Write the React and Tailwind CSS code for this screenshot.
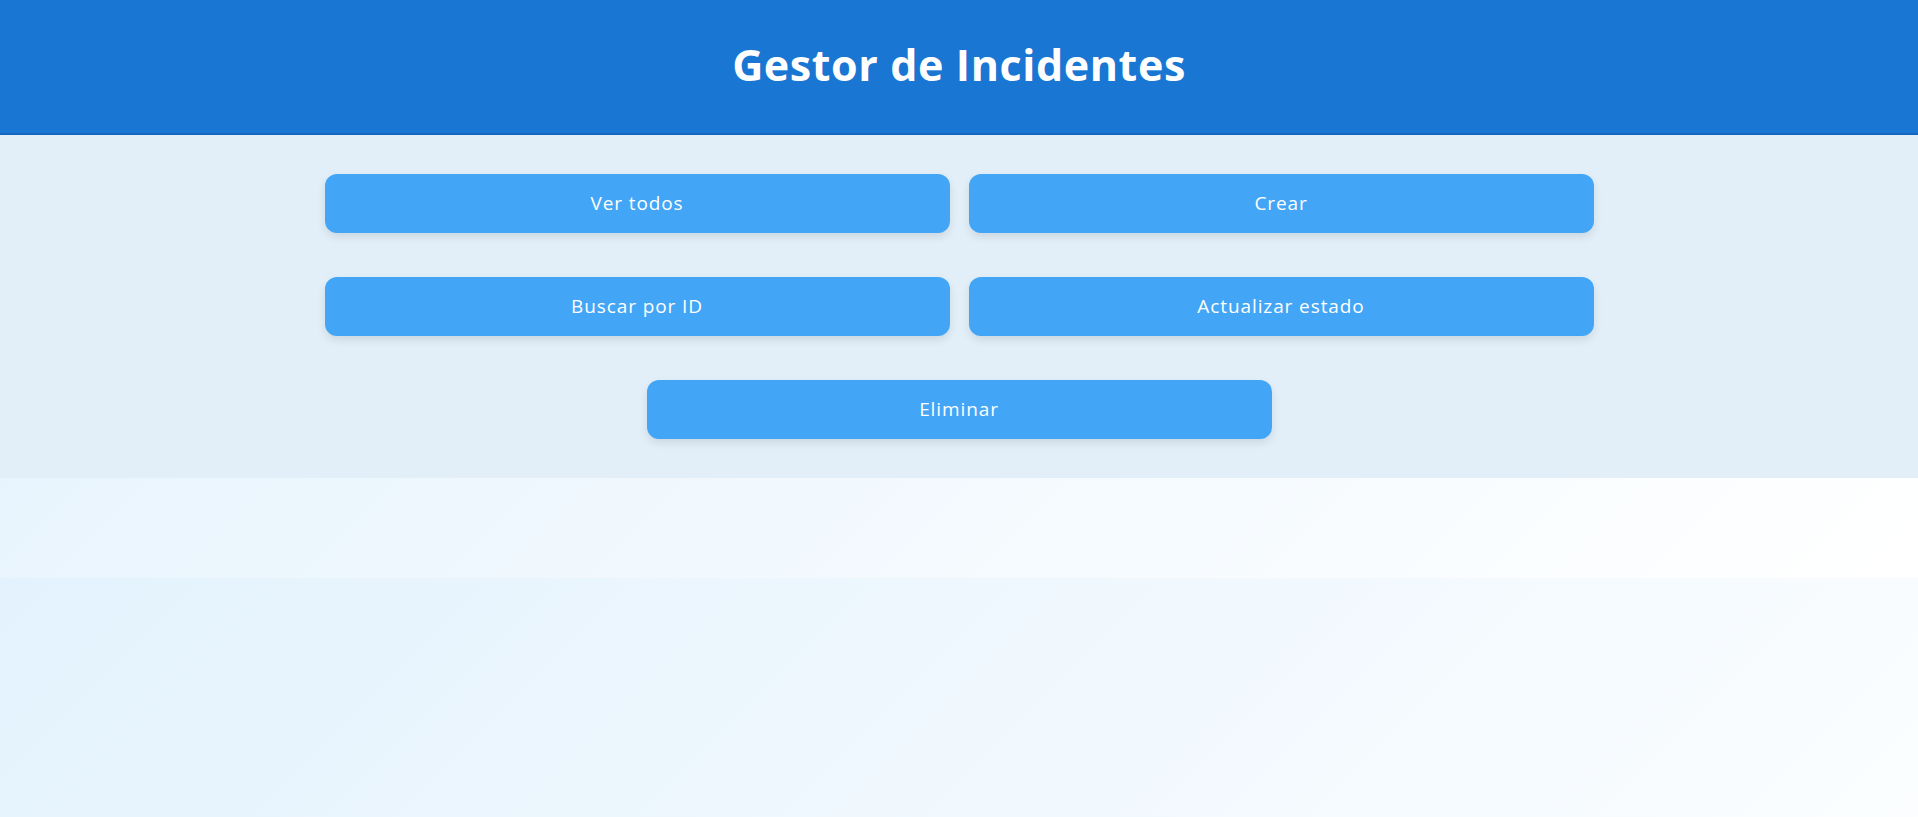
export default function App() {
  const buttons = ["Ver todos", "Crear", "Buscar por ID", "Actualizar estado", "Eliminar"];

  return (
    <div className="min-h-screen bg-[linear-gradient(135deg,#e3f2fd_0%,#ffffff_100%)] bg-[length:100%_578px] font-['Open_Sans',sans-serif]">
      <header className="h-[135px] flex items-center justify-center bg-[#1976d2] border-b-2 border-[#1565c0] shadow-[0_2px_4px_rgba(0,0,0,0.12)]">
        <h1 className="text-[43px] font-bold text-white tracking-[0.6px] -mt-[2px]">Gestor de Incidentes</h1>
      </header>
      <section className="bg-[#e2eff9] py-[39px]">
        <div className="mx-auto w-[1269px] flex flex-wrap justify-center gap-x-[19px] gap-y-[44px]">
          {buttons.map((label) => (
            <button
              key={label}
              className="w-[625px] h-[59px] rounded-[12px] bg-[#42a5f5] text-white text-[19px] tracking-[0.9px] shadow-[0_4px_8px_rgba(0,0,0,0.1)] hover:bg-[#1e88e5]"
            >
              {label}
            </button>
          ))}
        </div>
      </section>
    </div>
  );
}
